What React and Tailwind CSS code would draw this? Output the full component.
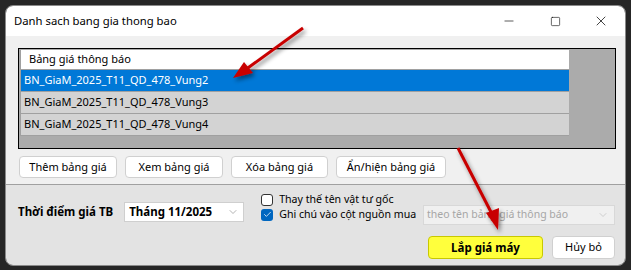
import { ChevronDown, Minus, Square, X, Check } from 'lucide-react'

const FONT = { fontFamily: '"Noto Sans", "Liberation Sans", sans-serif' }

const rows = [
  'BN_GiaM_2025_T11_QD_478_Vung2',
  'BN_GiaM_2025_T11_QD_478_Vung3',
  'BN_GiaM_2025_T11_QD_478_Vung4',
]

function Btn({ children, className = '' }) {
  return (
    <button
      className={`flex h-[22px] items-center justify-center whitespace-nowrap rounded-[4px] border border-[#d0d0d0] bg-white text-[11px] text-black ${className}`}
    >
      {children}
    </button>
  )
}

export default function App() {
  return (
    <div className="relative h-[270px] w-[631px] overflow-hidden bg-[#262626] pl-[5px] pt-[5px]" style={FONT}>
      <div className="flex h-[261px] w-[621px] flex-col overflow-hidden rounded-[8px] border border-[#8a8a8a]">
        {/* title bar */}
        <div className="flex h-[30px] shrink-0 items-center bg-white pl-[8px]">
          <span className="whitespace-nowrap text-[11.3px] text-black">Danh sach bang gia thong bao</span>
          <div className="ml-auto flex h-full items-center pr-[1px]">
            <div className="flex w-[46px] justify-center">
              <Minus size={14} strokeWidth={1.1} />
            </div>
            <div className="flex w-[46px] justify-center">
              <Square size={11} strokeWidth={1.3} />
            </div>
            <div className="flex w-[46px] justify-center">
              <X size={16} strokeWidth={1.1} />
            </div>
          </div>
        </div>

        {/* upper body */}
        <div className="flex h-[148px] shrink-0 flex-col bg-[#f0f0f0] px-[12px] pt-[12px]">
          <div className="h-[101px] w-[598px] border border-black bg-[#ababab] pl-[1px] pt-[1px]">
            <div className="w-[549px] border-l border-[#a0a0a0]">
              <div className="flex h-[20px] items-center whitespace-nowrap border-b border-[#a0a0a0] bg-white pl-[8px] text-[11px]">
                Bảng giá thông báo
              </div>
              {rows.map((r, i) => (
                <div
                  key={r}
                  className={`flex h-[22px] items-center whitespace-nowrap border-b border-[#a0a0a0] pl-[3px] text-[11px] ${
                    i === 0 ? 'bg-[#0078d7] text-white' : 'bg-[#d3d3d3] text-black'
                  }`}
                >
                  {r}
                </div>
              ))}
            </div>
          </div>
          <div className="mt-[7px] flex gap-[8px] pl-[1px]">
            <Btn className="w-[98px]">Thêm bảng giá</Btn>
            <Btn className="w-[98px]">Xem bảng giá</Btn>
            <Btn className="w-[97px]">Xóa bảng giá</Btn>
            <Btn className="w-[110px]">Ẩn/hiện bảng giá</Btn>
          </div>
        </div>

        {/* bottom panel */}
        <div className="flex flex-1 flex-col border-t border-[#a0a0a0] bg-[#e3e3e3] pl-[12px] pr-[10px]">
          <div className="mt-[8px] flex items-start">
            <span className="mt-[10px] whitespace-nowrap text-[11.5px] font-bold text-black">Thời điểm giá TB</span>
            <div className="ml-[11px] mt-[9px] flex h-[20px] w-[120px] items-center justify-between border border-[#cfcfcf] bg-white pl-[4px] pr-[4px]">
              <span className="whitespace-nowrap text-[11.5px] font-bold">Tháng 11/2025</span>
              <ChevronDown size={12} strokeWidth={1} color="#666" />
            </div>
            <div className="ml-[17px] flex flex-col gap-[2px]">
              <label className="flex items-center gap-[6px] whitespace-nowrap text-[10.6px] leading-[13px]">
                <span className="h-[12px] w-[12px] rounded-[3px] border border-[#333] bg-white" />
                Thay thế tên vật tư gốc
              </label>
              <label className="flex items-center gap-[6px] whitespace-nowrap text-[10.6px] leading-[13px]">
                <span className="flex h-[12px] w-[12px] items-center justify-center rounded-[3px] bg-[#0067c0]">
                  <Check size={9} strokeWidth={2} color="white" />
                </span>
                Ghi chú vào cột nguồn mua
              </label>
            </div>
            <div className="ml-auto mt-[12px] flex h-[20px] w-[192px] items-center justify-between border border-[#d8d8d8] bg-[#f0f0f0] pl-[3px] pr-[5px]">
              <span className="whitespace-nowrap text-[10.5px] text-[#a6a6a6]">theo tên bảng giá thông báo</span>
              <ChevronDown size={12} strokeWidth={1} color="#aaa" />
            </div>
          </div>
          <div className="mt-auto mb-[6px] flex justify-end gap-[9px]">
            <button className="flex h-[23px] w-[115px] items-center justify-center whitespace-nowrap rounded-[4px] border border-[#c8c800] bg-[#ffff3c] text-[11.5px] font-bold text-black">
              Lắp giá máy
            </button>
            <Btn className="h-[23px] w-[63px] text-[11.5px]">Hủy bỏ</Btn>
          </div>
        </div>
      </div>

      {/* annotation arrows */}
      <svg className="pointer-events-none absolute left-0 top-0" width="631" height="270">
        <defs>
          <filter id="sh" x="-20%" y="-20%" width="140%" height="140%">
            <feDropShadow dx="2" dy="3" stdDeviation="2" floodColor="#000" floodOpacity="0.45" />
          </filter>
        </defs>
        <g filter="url(#sh)" fill="#c80000" stroke="#c80000">
          <line x1="303" y1="28" x2="245" y2="70" strokeWidth="3" />
          <polygon points="233,78 244,62 253,73" stroke="none" />
          <line x1="458" y1="148" x2="492" y2="214" strokeWidth="3" />
          <polygon points="498,230 486,213 499,208" stroke="none" />
        </g>
      </svg>
    </div>
  )
}
